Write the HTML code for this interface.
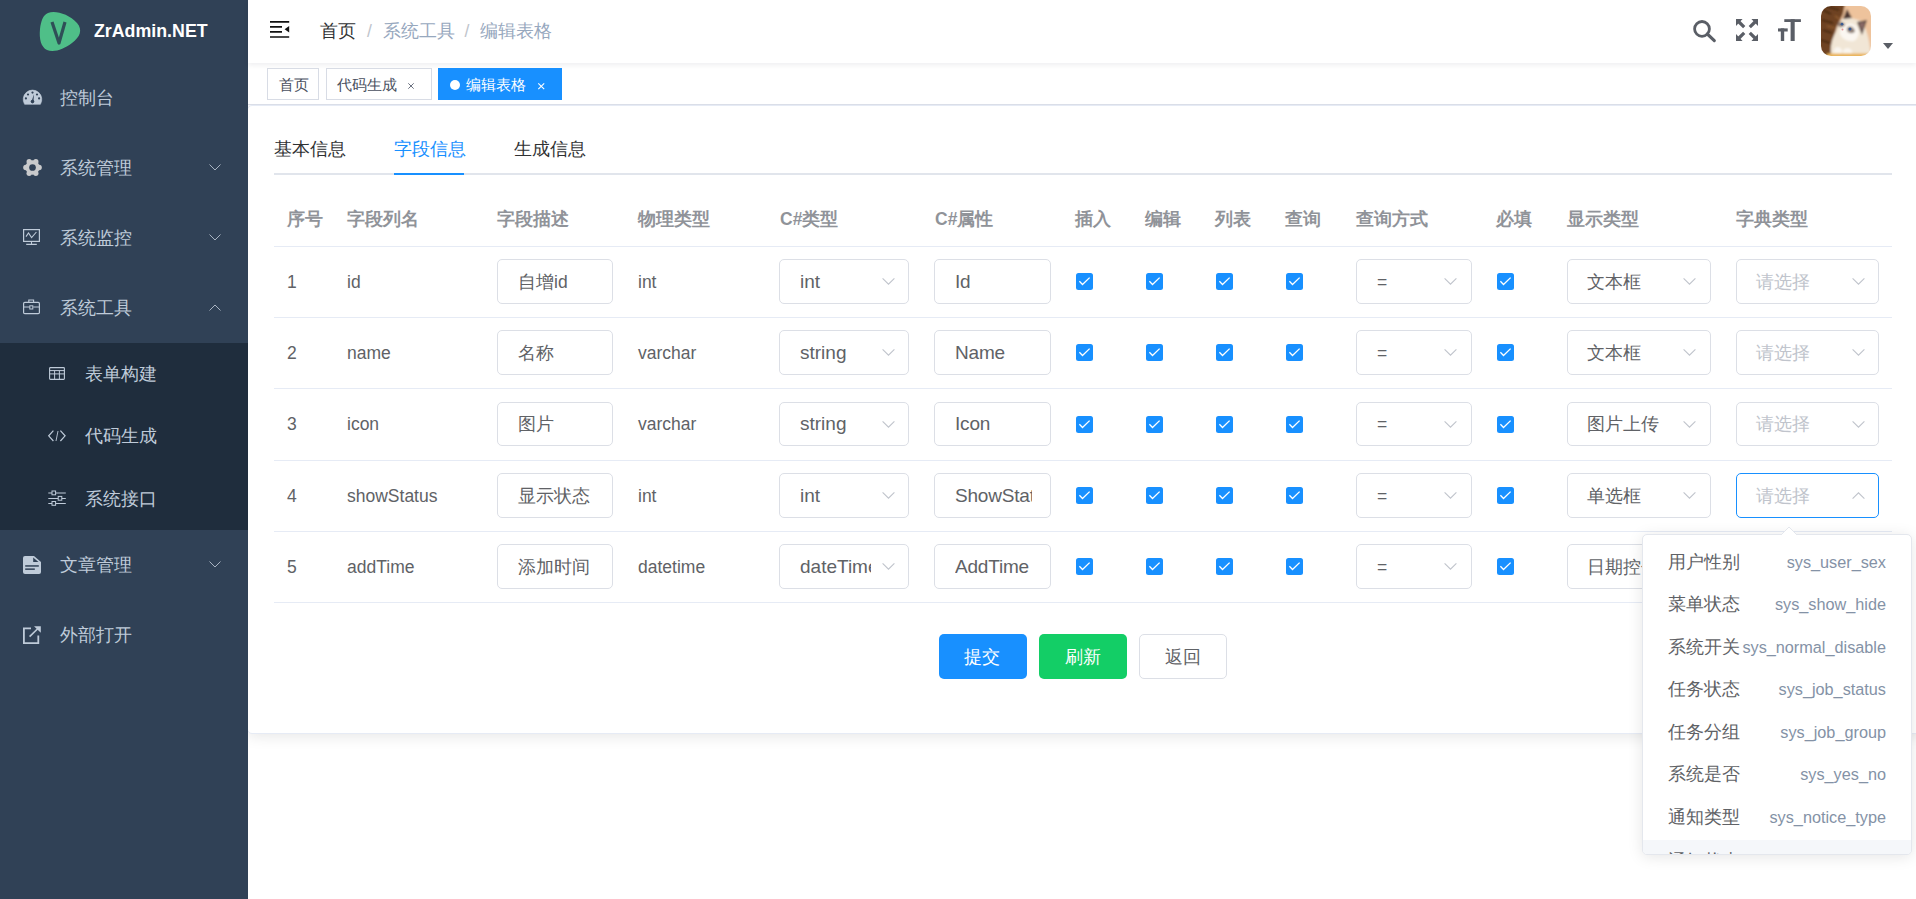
<!DOCTYPE html><html><head><meta charset="utf-8"><style>
*{box-sizing:border-box;margin:0;padding:0}
html,body{width:1916px;height:899px;overflow:hidden;background:#fff;font-family:"Liberation Sans", sans-serif}
.a{position:absolute}
.t{position:absolute;white-space:nowrap}
svg{position:absolute;overflow:visible}
</style></head><body>
<div class="a" style="left:247px;top:105px;width:1680px;height:629px;background:#fff;border:1px solid #e6ebf5;border-radius:5px;box-shadow:0 2px 15px 0 rgba(0,0,0,.1)"></div>
<div class="a" style="left:0;top:0;width:248px;height:899px;background:#304156"></div>
<div class="a" style="left:0;top:343px;width:248px;height:187px;background:#1f2d3d"></div>
<svg style="left:39px;top:11px" width="42" height="41" viewBox="0 0 42 41">
<path d="M9 2 C16 -1 30 3 38 12 C44 19 41 26 33 32 C25 38 15 42 8 39 C2 36 0 28 1 18 C2 10 4 4 9 2 Z" fill="#4fbf88"/>
<path d="M13 11 L20 32 L26 11" fill="none" stroke="#2f4f57" stroke-width="3.2" stroke-linejoin="round"/>
</svg>
<div class="t" style="left:94px;top:16.5px;height:28px;line-height:28px;font-size:17.8px;color:#fff;font-weight:bold;">ZrAdmin.NET</div>
<div class="t" style="left:60px;top:84.0px;height:28px;line-height:28px;font-size:17.5px;color:#bfcbd9;font-weight:normal;">控制台</div>
<div class="t" style="left:60px;top:154.0px;height:28px;line-height:28px;font-size:17.5px;color:#bfcbd9;font-weight:normal;">系统管理</div>
<svg style="left:209px;top:164px" width="12" height="7"><path d="M0.5 0.5 L6 6 L11.5 0.5" fill="none" stroke="#a9b4c2" stroke-width="1"/></svg>
<div class="t" style="left:60px;top:224.0px;height:28px;line-height:28px;font-size:17.5px;color:#bfcbd9;font-weight:normal;">系统监控</div>
<svg style="left:209px;top:234px" width="12" height="7"><path d="M0.5 0.5 L6 6 L11.5 0.5" fill="none" stroke="#a9b4c2" stroke-width="1"/></svg>
<div class="t" style="left:60px;top:294.0px;height:28px;line-height:28px;font-size:17.5px;color:#bfcbd9;font-weight:normal;">系统工具</div>
<svg style="left:209px;top:304px" width="12" height="7"><path d="M0.5 6.5 L6 1 L11.5 6.5" fill="none" stroke="#a9b4c2" stroke-width="1"/></svg>
<div class="t" style="left:60px;top:551.0px;height:28px;line-height:28px;font-size:17.5px;color:#bfcbd9;font-weight:normal;">文章管理</div>
<svg style="left:209px;top:561px" width="12" height="7"><path d="M0.5 0.5 L6 6 L11.5 0.5" fill="none" stroke="#a9b4c2" stroke-width="1"/></svg>
<div class="t" style="left:60px;top:621.0px;height:28px;line-height:28px;font-size:17.5px;color:#bfcbd9;font-weight:normal;">外部打开</div>
<div class="t" style="left:85px;top:360.0px;height:28px;line-height:28px;font-size:17.5px;color:#bfcbd9;font-weight:normal;">表单构建</div>
<div class="t" style="left:85px;top:422.0px;height:28px;line-height:28px;font-size:17.5px;color:#bfcbd9;font-weight:normal;">代码生成</div>
<div class="t" style="left:85px;top:485.0px;height:28px;line-height:28px;font-size:17.5px;color:#bfcbd9;font-weight:normal;">系统接口</div>
<svg style="left:23px;top:90px" width="19" height="15" viewBox="0 0 19 15">
<path d="M1.6 14.3 A9.3 9.3 0 1 1 17.4 14.3 Z" fill="#bfcbd9" stroke="#bfcbd9" stroke-width="0.6" stroke-linejoin="round"/>
<circle cx="9.5" cy="2.6" r="1.1" fill="#304156"/><circle cx="5" cy="4.5" r="1.1" fill="#304156"/><circle cx="14" cy="4.5" r="1.1" fill="#304156"/>
<circle cx="2.9" cy="8.4" r="1.1" fill="#304156"/><circle cx="16.1" cy="8.4" r="1.1" fill="#304156"/>
<path d="M8.6 11.6 L10.9 4.2 L10.5 11.8 Z" fill="#304156"/><circle cx="9.5" cy="11.6" r="1.8" fill="#304156"/>
</svg>
<svg style="left:23px;top:159px" width="19" height="17" viewBox="0 0 18.5 16.8">
<circle cx="9.25" cy="8.4" r="7.1" fill="#c9cacc"/><circle cx="15.85" cy="8.40" r="2.6" fill="#c9cacc"/><circle cx="12.55" cy="14.12" r="2.6" fill="#c9cacc"/><circle cx="5.95" cy="14.12" r="2.6" fill="#c9cacc"/><circle cx="2.65" cy="8.40" r="2.6" fill="#c9cacc"/><circle cx="5.95" cy="2.68" r="2.6" fill="#c9cacc"/><circle cx="12.55" cy="2.68" r="2.6" fill="#c9cacc"/>
<circle cx="9.25" cy="8.4" r="3.3" fill="#304156"/>
</svg>
<svg style="left:23px;top:229px" width="18" height="17" viewBox="0 0 18 17">
<rect x="0.6" y="0.6" width="15.8" height="11.8" fill="none" stroke="#bfcbd9" stroke-width="1.2"/>
<path d="M3 7.6 L5.5 3.9 L8.6 8.5 L13.4 3" fill="none" stroke="#bfcbd9" stroke-width="1.1"/>
<path d="M8.5 12.4 L8.5 15.4 M3.2 15.4 L13.8 15.4" stroke="#bfcbd9" stroke-width="1.1"/>
</svg>
<svg style="left:23px;top:299px" width="18" height="16" viewBox="0 0 18 16">
<rect x="0.6" y="3.4" width="15.8" height="11.2" rx="1.2" fill="none" stroke="#bfcbd9" stroke-width="1.2"/>
<path d="M5.8 3.4 L5.8 1 L10.6 1 L10.6 3.4" fill="none" stroke="#bfcbd9" stroke-width="1.1"/>
<path d="M0.6 8 L6.8 8 M10.2 8 L16.4 8" stroke="#bfcbd9" stroke-width="1.1"/>
<rect x="6.8" y="6.8" width="3" height="3.2" fill="none" stroke="#bfcbd9" stroke-width="1"/>
</svg>
<svg style="left:49px;top:367px" width="16" height="13" viewBox="0 0 16 13">
<rect x="0.6" y="0.6" width="14.8" height="11.8" rx="0.8" fill="none" stroke="#bfcbd9" stroke-width="1.1"/>
<path d="M0.6 3.6 L15.4 3.6 M0.6 6.9 L15.4 6.9 M5.6 3.6 L5.6 12.4 M10.4 3.6 L10.4 12.4" stroke="#bfcbd9" stroke-width="1"/>
</svg>
<svg style="left:48px;top:430px" width="18" height="12" viewBox="0 0 18 12">
<path d="M5.4 0.6 L0.7 5.8 L5.4 11" fill="none" stroke="#bfcbd9" stroke-width="1.2"/>
<path d="M12.4 0.6 L17.1 5.8 L12.4 11" fill="none" stroke="#bfcbd9" stroke-width="1.2"/>
<path d="M10 1 L8 11" stroke="#bfcbd9" stroke-width="0.9"/>
</svg>
<svg style="left:48px;top:490px" width="18" height="16" viewBox="0 0 18 16">
<path d="M0.3 3 L17.8 3 M0.3 8.5 L17.8 8.5 M0.3 13.5 L17.8 13.5" stroke="#bfcbd9" stroke-width="1"/>
<rect x="4" y="1" width="3.6" height="3.8" fill="#1f2d3d" stroke="#bfcbd9" stroke-width="1"/>
<rect x="10.2" y="6.4" width="3.6" height="3.8" fill="#1f2d3d" stroke="#bfcbd9" stroke-width="1"/>
<rect x="4" y="11.5" width="3.6" height="3.8" fill="#1f2d3d" stroke="#bfcbd9" stroke-width="1"/>
</svg>
<svg style="left:23px;top:556px" width="18" height="18" viewBox="0 0 18 18">
<path d="M2 0 L11 0 L18 6 L18 16 Q18 18 16 18 L2 18 Q0 18 0 16 L0 2 Q0 0 2 0 Z" fill="#bfcbd9"/>
<path d="M10.2 1.5 L10.2 6 L15.5 6 Z" fill="#304156"/>
<rect x="2.2" y="9.2" width="13.6" height="1.5" fill="#304156"/>
<rect x="2.2" y="12.4" width="9.6" height="1.5" fill="#304156"/>
</svg>
<svg style="left:23px;top:626px" width="18" height="18" viewBox="0 0 18 18">
<path d="M8 2.4 L0.9 2.4 L0.9 17.1 L15.3 17.1 L15.3 9.6" fill="none" stroke="#bfcbd9" stroke-width="1.8"/>
<path d="M6.6 10.6 L16.2 1.2" stroke="#bfcbd9" stroke-width="1.6"/>
<path d="M11 0.2 L17.8 0.2 L17.8 6.8 Z" fill="#bfcbd9"/>
</svg>
<div class="a" style="left:248px;top:63px;width:1668px;height:42px;background:#fff;border-bottom:1.5px solid #dadee8"></div>
<div class="a" style="left:248px;top:0;width:1668px;height:63px;background:#fff;box-shadow:0 2px 5px rgba(0,21,41,.07)"></div>
<svg style="left:270px;top:20px" width="20" height="19" viewBox="0 0 20 19">
<path d="M0 1.8 L19.2 1.8 M0 6.8 L12 6.8 M0 11.8 L12 11.8 M0 17 L19.2 17" stroke="#111" stroke-width="1.7"/>
<path d="M19.2 6 L14.6 9.3 L19.2 12.6 Z" fill="#111"/>
</svg>
<div class="t" style="left:320px;top:16.5px;height:28px;line-height:28px;font-size:17.5px;color:#303133;font-weight:normal;">首页</div>
<div class="t" style="left:367px;top:16.5px;height:28px;line-height:28px;font-size:17.5px;color:#c0c4cc;font-weight:normal;">/</div>
<div class="t" style="left:383px;top:16.5px;height:28px;line-height:28px;font-size:17.5px;color:#97a8be;font-weight:normal;">系统工具</div>
<div class="t" style="left:464.5px;top:16.5px;height:28px;line-height:28px;font-size:17.5px;color:#c0c4cc;font-weight:normal;">/</div>
<div class="t" style="left:480px;top:16.5px;height:28px;line-height:28px;font-size:17.5px;color:#97a8be;font-weight:normal;">编辑表格</div>
<svg style="left:1692px;top:19px" width="25" height="24" viewBox="0 0 25 24">
<circle cx="10" cy="9.9" r="7.4" fill="none" stroke="#5a5e66" stroke-width="2.8"/>
<path d="M15.3 15 L22.3 21.6" stroke="#5a5e66" stroke-width="3.1" stroke-linecap="round"/>
</svg>
<svg style="left:1736px;top:19px" width="22" height="22" viewBox="0 0 22 22">
<path d="M0 0 L6.6 0 L0 6.9 Z M22 0 L15.4 0 L22 6.9 Z M0 22 L6.6 22 L0 15.1 Z M22 22 L15.4 22 L22 15.1 Z" fill="#5a5e66"/>
<path d="M2 2 L8.2 8.2 M20 2 L13.8 8.2 M2 20 L8.2 13.8 M20 20 L13.8 13.8" stroke="#5a5e66" stroke-width="3.2"/>
</svg>
<svg style="left:1778px;top:19px" width="24" height="23" viewBox="0 0 24 23">
<rect x="6.3" y="0.2" width="16.6" height="2.8" fill="#5a5e66"/><rect x="12.6" y="0.2" width="4.1" height="21.8" fill="#5a5e66"/>
<rect x="0" y="9.4" width="9.7" height="3.1" fill="#5a5e66"/><rect x="2.8" y="9.4" width="3.4" height="12.6" fill="#5a5e66"/>
</svg>
<svg style="left:1821px;top:6px" width="50" height="50" viewBox="0 0 50 50">
<defs><clipPath id="av"><rect x="0" y="0" width="50" height="50" rx="10"/></clipPath>
<filter id="bl" x="-10%" y="-10%" width="120%" height="120%"><feGaussianBlur stdDeviation="0.9"/></filter></defs>
<g clip-path="url(#av)"><g filter="url(#bl)">
<rect x="-2" y="-2" width="54" height="54" fill="#eec39c"/>
<path d="M-2 -2 L24 -2 L22 8 L16 20 L12 34 L10 52 L-2 52 Z" fill="#6e4222"/>
<path d="M2 4 L10 8 M1 14 L12 17 M2 24 L11 27 M0 34 L9 37 M4 0 L18 4" stroke="#3e2410" stroke-width="1.6"/>
<path d="M14 10 L20 14 M6 20 L14 22" stroke="#9a6436" stroke-width="1.2"/>
<path d="M10 50 C9 40 11 32 15 26 C17 18 20 13 24 11 L30 12 C34 13 37 14 41 15 C45 22 48 32 49 42 L50 50 Z" fill="#f1e6d6"/>
<path d="M24 20 C27 16 33 17 36 21 C39 26 38 32 33 35 C27 36 21 33 19 28 C18 24 21 21 24 20 Z" fill="#fbf7f2"/>
<path d="M13 44 C14 40 19 40 21 44 L21 50 L12 50 Z M22 45 C24 41 29 41 31 45 L31 50 L22 50 Z" fill="#faf6f0"/>
<rect x="6" y="47.5" width="54" height="6" fill="#e9b45a"/>
<path d="M22 13 L26 3 L31 12 Z" fill="#4a3633"/>
<path d="M36 16 L46 14 L41 29 Z" fill="#54433f"/>
<path d="M38 17 L44 16 L41 25 Z" fill="#8a6a66"/>
<path d="M17 17 C19 15 23 16 24 19 C23 21 19 22 17 20 Z" fill="#8f8078"/>
<path d="M26 22 C29 19 33 21 34 25 C33 28 28 28 26 25 Z" fill="#8f8078"/>
</g>
<circle cx="21" cy="18.2" r="1.4" fill="#3b5c94"/><circle cx="29" cy="23" r="1.5" fill="#3b5c94"/>
<circle cx="21.5" cy="23.5" r="1" fill="#e49a9a"/>
</g></svg>
<svg style="left:1883px;top:43px" width="10" height="6"><path d="M0 0 L10 0 L5 6 Z" fill="#5a5e66"/></svg>
<div class="a" style="left:267px;top:68px;width:52px;height:32px;border:1.25px solid #d8dce5;background:#fff"></div>
<div class="t" style="left:278.5px;top:72.7px;height:24px;line-height:24px;font-size:15px;color:#495060;font-weight:normal;">首页</div>
<div class="a" style="left:326px;top:68px;width:106px;height:32px;border:1.25px solid #d8dce5;background:#fff"></div>
<div class="t" style="left:337px;top:72.7px;height:24px;line-height:24px;font-size:15px;color:#495060;font-weight:normal;">代码生成</div>
<svg style="left:407.5px;top:82.8px" width="6" height="6"><path d="M0.3 0.3 L5.7 5.7 M5.7 0.3 L0.3 5.7" stroke="#6b7180" stroke-width="1"/></svg>
<div class="a" style="left:438px;top:68px;width:124px;height:32px;background:#1890ff"></div>
<div class="a" style="left:450px;top:80px;width:10px;height:10px;border-radius:50%;background:#fff"></div>
<div class="t" style="left:466px;top:72.7px;height:24px;line-height:24px;font-size:15px;color:#fff;font-weight:normal;">编辑表格</div>
<svg style="left:537.8px;top:82.5px" width="6.5" height="6.5"><path d="M0.3 0.3 L6.2 6.2 M6.2 0.3 L0.3 6.2" stroke="#fff" stroke-width="1.1"/></svg>
<div class="a" style="left:274px;top:173px;width:1618px;height:1.6px;background:#e1e5ec"></div>
<div class="a" style="left:394px;top:172.7px;width:70px;height:2px;background:#1890ff"></div>
<div class="t" style="left:274px;top:135.0px;height:28px;line-height:28px;font-size:17.5px;color:#303133;font-weight:normal;">基本信息</div>
<div class="t" style="left:394px;top:135.0px;height:28px;line-height:28px;font-size:17.5px;color:#1890ff;font-weight:normal;">字段信息</div>
<div class="t" style="left:514px;top:135.0px;height:28px;line-height:28px;font-size:17.5px;color:#303133;font-weight:normal;">生成信息</div>
<div class="t" style="left:287px;top:204.5px;height:28px;line-height:28px;font-size:17.5px;color:#909399;font-weight:bold;">序号</div>
<div class="t" style="left:347px;top:204.5px;height:28px;line-height:28px;font-size:17.5px;color:#909399;font-weight:bold;">字段列名</div>
<div class="t" style="left:497px;top:204.5px;height:28px;line-height:28px;font-size:17.5px;color:#909399;font-weight:bold;">字段描述</div>
<div class="t" style="left:638px;top:204.5px;height:28px;line-height:28px;font-size:17.5px;color:#909399;font-weight:bold;">物理类型</div>
<div class="t" style="left:780px;top:204.5px;height:28px;line-height:28px;font-size:17.5px;color:#909399;font-weight:bold;">C#类型</div>
<div class="t" style="left:935px;top:204.5px;height:28px;line-height:28px;font-size:17.5px;color:#909399;font-weight:bold;">C#属性</div>
<div class="t" style="left:1075px;top:204.5px;height:28px;line-height:28px;font-size:17.5px;color:#909399;font-weight:bold;">插入</div>
<div class="t" style="left:1145px;top:204.5px;height:28px;line-height:28px;font-size:17.5px;color:#909399;font-weight:bold;">编辑</div>
<div class="t" style="left:1215px;top:204.5px;height:28px;line-height:28px;font-size:17.5px;color:#909399;font-weight:bold;">列表</div>
<div class="t" style="left:1285px;top:204.5px;height:28px;line-height:28px;font-size:17.5px;color:#909399;font-weight:bold;">查询</div>
<div class="t" style="left:1356px;top:204.5px;height:28px;line-height:28px;font-size:17.5px;color:#909399;font-weight:bold;">查询方式</div>
<div class="t" style="left:1496px;top:204.5px;height:28px;line-height:28px;font-size:17.5px;color:#909399;font-weight:bold;">必填</div>
<div class="t" style="left:1567px;top:204.5px;height:28px;line-height:28px;font-size:17.5px;color:#909399;font-weight:bold;">显示类型</div>
<div class="t" style="left:1736px;top:204.5px;height:28px;line-height:28px;font-size:17.5px;color:#909399;font-weight:bold;">字典类型</div>
<div class="a" style="left:274px;top:246px;width:1618px;height:1.25px;background:#e6ebf5"></div>
<div class="a" style="left:274px;top:317px;width:1618px;height:1.25px;background:#e6ebf5"></div>
<div class="a" style="left:274px;top:388px;width:1618px;height:1.25px;background:#e6ebf5"></div>
<div class="a" style="left:274px;top:460px;width:1618px;height:1.25px;background:#e6ebf5"></div>
<div class="a" style="left:274px;top:531px;width:1618px;height:1.25px;background:#e6ebf5"></div>
<div class="a" style="left:274px;top:602px;width:1618px;height:1.25px;background:#e6ebf5"></div>
<div class="t" style="left:287px;top:267.5px;height:28px;line-height:28px;font-size:17.5px;color:#606266;font-weight:normal;">1</div>
<div class="t" style="left:347px;top:267.5px;height:28px;line-height:28px;font-size:17.5px;color:#606266;font-weight:normal;">id</div>
<div class="a" style="left:497px;top:259.25px;width:116px;height:44.5px;border:1.25px solid #dcdfe6;border-radius:5px;background:#fff"></div>
<div class="t" style="left:518px;top:267.5px;height:28px;line-height:28px;font-size:17.5px;color:#606266;font-weight:normal;">自增id</div>
<div class="t" style="left:638px;top:267.5px;height:28px;line-height:28px;font-size:17.5px;color:#606266;font-weight:normal;">int</div>
<div class="a" style="left:779px;top:259.25px;width:130px;height:44.5px;border:1.25px solid #dcdfe6;border-radius:5px;background:#fff"></div>
<div class="t" style="left:800px;top:267.5px;height:28px;line-height:28px;width:71px;overflow:hidden;font-size:19px;color:#606266">int</div>
<svg style="left:882px;top:278.0px" width="13" height="7"><path d="M0.6 0.4 L6.5 6.2 L12.4 0.4" fill="none" stroke="#c0c4cc" stroke-width="1.1"/></svg>
<div class="a" style="left:934px;top:259.25px;width:117px;height:44.5px;border:1.25px solid #dcdfe6;border-radius:5px;background:#fff"></div>
<div class="t" style="left:955px;top:267.5px;height:28px;line-height:28px;width:77px;overflow:hidden;letter-spacing:-0.2px;font-size:19px;color:#606266">Id</div>
<svg style="left:1076px;top:273.0px" width="17" height="17" viewBox="0 0 17 17"><rect width="17" height="17" rx="2.5" fill="#1890ff"/><path d="M3.4 8.3 L6.5 11.5 L13.6 4.6" fill="none" stroke="#fff" stroke-width="1.3"/></svg>
<svg style="left:1146px;top:273.0px" width="17" height="17" viewBox="0 0 17 17"><rect width="17" height="17" rx="2.5" fill="#1890ff"/><path d="M3.4 8.3 L6.5 11.5 L13.6 4.6" fill="none" stroke="#fff" stroke-width="1.3"/></svg>
<svg style="left:1216px;top:273.0px" width="17" height="17" viewBox="0 0 17 17"><rect width="17" height="17" rx="2.5" fill="#1890ff"/><path d="M3.4 8.3 L6.5 11.5 L13.6 4.6" fill="none" stroke="#fff" stroke-width="1.3"/></svg>
<svg style="left:1286px;top:273.0px" width="17" height="17" viewBox="0 0 17 17"><rect width="17" height="17" rx="2.5" fill="#1890ff"/><path d="M3.4 8.3 L6.5 11.5 L13.6 4.6" fill="none" stroke="#fff" stroke-width="1.3"/></svg>
<svg style="left:1497px;top:273.0px" width="17" height="17" viewBox="0 0 17 17"><rect width="17" height="17" rx="2.5" fill="#1890ff"/><path d="M3.4 8.3 L6.5 11.5 L13.6 4.6" fill="none" stroke="#fff" stroke-width="1.3"/></svg>
<div class="a" style="left:1356px;top:259.25px;width:116px;height:44.5px;border:1.25px solid #dcdfe6;border-radius:5px;background:#fff"></div>
<div class="t" style="left:1377px;top:267.5px;height:28px;line-height:28px;font-size:17.5px;color:#606266;font-weight:normal;">=</div>
<svg style="left:1444px;top:278.0px" width="13" height="7"><path d="M0.6 0.4 L6.5 6.2 L12.4 0.4" fill="none" stroke="#c0c4cc" stroke-width="1.1"/></svg>
<div class="a" style="left:1567px;top:259.25px;width:144px;height:44.5px;border:1.25px solid #dcdfe6;border-radius:5px;background:#fff"></div>
<div class="t" style="left:1587px;top:267.5px;height:28px;line-height:28px;font-size:17.5px;color:#606266;font-weight:normal;">文本框</div>
<svg style="left:1683px;top:278.0px" width="13" height="7"><path d="M0.6 0.4 L6.5 6.2 L12.4 0.4" fill="none" stroke="#c0c4cc" stroke-width="1.1"/></svg>
<div class="a" style="left:1736px;top:259.25px;width:143px;height:44.5px;border:1.25px solid #dcdfe6;border-radius:5px;background:#fff"></div>
<div class="t" style="left:1756px;top:267.5px;height:28px;line-height:28px;font-size:17.5px;color:#c0c4cc;font-weight:normal;">请选择</div>
<svg style="left:1852px;top:278.0px" width="13" height="7"><path d="M0.6 0.4 L6.5 6.2 L12.4 0.4" fill="none" stroke="#c0c4cc" stroke-width="1.1"/></svg>
<div class="t" style="left:287px;top:338.5px;height:28px;line-height:28px;font-size:17.5px;color:#606266;font-weight:normal;">2</div>
<div class="t" style="left:347px;top:338.5px;height:28px;line-height:28px;font-size:17.5px;color:#606266;font-weight:normal;">name</div>
<div class="a" style="left:497px;top:330.25px;width:116px;height:44.5px;border:1.25px solid #dcdfe6;border-radius:5px;background:#fff"></div>
<div class="t" style="left:518px;top:338.5px;height:28px;line-height:28px;font-size:17.5px;color:#606266;font-weight:normal;">名称</div>
<div class="t" style="left:638px;top:338.5px;height:28px;line-height:28px;font-size:17.5px;color:#606266;font-weight:normal;">varchar</div>
<div class="a" style="left:779px;top:330.25px;width:130px;height:44.5px;border:1.25px solid #dcdfe6;border-radius:5px;background:#fff"></div>
<div class="t" style="left:800px;top:338.5px;height:28px;line-height:28px;width:71px;overflow:hidden;font-size:19px;color:#606266">string</div>
<svg style="left:882px;top:349.0px" width="13" height="7"><path d="M0.6 0.4 L6.5 6.2 L12.4 0.4" fill="none" stroke="#c0c4cc" stroke-width="1.1"/></svg>
<div class="a" style="left:934px;top:330.25px;width:117px;height:44.5px;border:1.25px solid #dcdfe6;border-radius:5px;background:#fff"></div>
<div class="t" style="left:955px;top:338.5px;height:28px;line-height:28px;width:77px;overflow:hidden;letter-spacing:-0.2px;font-size:19px;color:#606266">Name</div>
<svg style="left:1076px;top:344.0px" width="17" height="17" viewBox="0 0 17 17"><rect width="17" height="17" rx="2.5" fill="#1890ff"/><path d="M3.4 8.3 L6.5 11.5 L13.6 4.6" fill="none" stroke="#fff" stroke-width="1.3"/></svg>
<svg style="left:1146px;top:344.0px" width="17" height="17" viewBox="0 0 17 17"><rect width="17" height="17" rx="2.5" fill="#1890ff"/><path d="M3.4 8.3 L6.5 11.5 L13.6 4.6" fill="none" stroke="#fff" stroke-width="1.3"/></svg>
<svg style="left:1216px;top:344.0px" width="17" height="17" viewBox="0 0 17 17"><rect width="17" height="17" rx="2.5" fill="#1890ff"/><path d="M3.4 8.3 L6.5 11.5 L13.6 4.6" fill="none" stroke="#fff" stroke-width="1.3"/></svg>
<svg style="left:1286px;top:344.0px" width="17" height="17" viewBox="0 0 17 17"><rect width="17" height="17" rx="2.5" fill="#1890ff"/><path d="M3.4 8.3 L6.5 11.5 L13.6 4.6" fill="none" stroke="#fff" stroke-width="1.3"/></svg>
<svg style="left:1497px;top:344.0px" width="17" height="17" viewBox="0 0 17 17"><rect width="17" height="17" rx="2.5" fill="#1890ff"/><path d="M3.4 8.3 L6.5 11.5 L13.6 4.6" fill="none" stroke="#fff" stroke-width="1.3"/></svg>
<div class="a" style="left:1356px;top:330.25px;width:116px;height:44.5px;border:1.25px solid #dcdfe6;border-radius:5px;background:#fff"></div>
<div class="t" style="left:1377px;top:338.5px;height:28px;line-height:28px;font-size:17.5px;color:#606266;font-weight:normal;">=</div>
<svg style="left:1444px;top:349.0px" width="13" height="7"><path d="M0.6 0.4 L6.5 6.2 L12.4 0.4" fill="none" stroke="#c0c4cc" stroke-width="1.1"/></svg>
<div class="a" style="left:1567px;top:330.25px;width:144px;height:44.5px;border:1.25px solid #dcdfe6;border-radius:5px;background:#fff"></div>
<div class="t" style="left:1587px;top:338.5px;height:28px;line-height:28px;font-size:17.5px;color:#606266;font-weight:normal;">文本框</div>
<svg style="left:1683px;top:349.0px" width="13" height="7"><path d="M0.6 0.4 L6.5 6.2 L12.4 0.4" fill="none" stroke="#c0c4cc" stroke-width="1.1"/></svg>
<div class="a" style="left:1736px;top:330.25px;width:143px;height:44.5px;border:1.25px solid #dcdfe6;border-radius:5px;background:#fff"></div>
<div class="t" style="left:1756px;top:338.5px;height:28px;line-height:28px;font-size:17.5px;color:#c0c4cc;font-weight:normal;">请选择</div>
<svg style="left:1852px;top:349.0px" width="13" height="7"><path d="M0.6 0.4 L6.5 6.2 L12.4 0.4" fill="none" stroke="#c0c4cc" stroke-width="1.1"/></svg>
<div class="t" style="left:287px;top:410.0px;height:28px;line-height:28px;font-size:17.5px;color:#606266;font-weight:normal;">3</div>
<div class="t" style="left:347px;top:410.0px;height:28px;line-height:28px;font-size:17.5px;color:#606266;font-weight:normal;">icon</div>
<div class="a" style="left:497px;top:401.75px;width:116px;height:44.5px;border:1.25px solid #dcdfe6;border-radius:5px;background:#fff"></div>
<div class="t" style="left:518px;top:410.0px;height:28px;line-height:28px;font-size:17.5px;color:#606266;font-weight:normal;">图片</div>
<div class="t" style="left:638px;top:410.0px;height:28px;line-height:28px;font-size:17.5px;color:#606266;font-weight:normal;">varchar</div>
<div class="a" style="left:779px;top:401.75px;width:130px;height:44.5px;border:1.25px solid #dcdfe6;border-radius:5px;background:#fff"></div>
<div class="t" style="left:800px;top:410.0px;height:28px;line-height:28px;width:71px;overflow:hidden;font-size:19px;color:#606266">string</div>
<svg style="left:882px;top:420.5px" width="13" height="7"><path d="M0.6 0.4 L6.5 6.2 L12.4 0.4" fill="none" stroke="#c0c4cc" stroke-width="1.1"/></svg>
<div class="a" style="left:934px;top:401.75px;width:117px;height:44.5px;border:1.25px solid #dcdfe6;border-radius:5px;background:#fff"></div>
<div class="t" style="left:955px;top:410.0px;height:28px;line-height:28px;width:77px;overflow:hidden;letter-spacing:-0.2px;font-size:19px;color:#606266">Icon</div>
<svg style="left:1076px;top:415.5px" width="17" height="17" viewBox="0 0 17 17"><rect width="17" height="17" rx="2.5" fill="#1890ff"/><path d="M3.4 8.3 L6.5 11.5 L13.6 4.6" fill="none" stroke="#fff" stroke-width="1.3"/></svg>
<svg style="left:1146px;top:415.5px" width="17" height="17" viewBox="0 0 17 17"><rect width="17" height="17" rx="2.5" fill="#1890ff"/><path d="M3.4 8.3 L6.5 11.5 L13.6 4.6" fill="none" stroke="#fff" stroke-width="1.3"/></svg>
<svg style="left:1216px;top:415.5px" width="17" height="17" viewBox="0 0 17 17"><rect width="17" height="17" rx="2.5" fill="#1890ff"/><path d="M3.4 8.3 L6.5 11.5 L13.6 4.6" fill="none" stroke="#fff" stroke-width="1.3"/></svg>
<svg style="left:1286px;top:415.5px" width="17" height="17" viewBox="0 0 17 17"><rect width="17" height="17" rx="2.5" fill="#1890ff"/><path d="M3.4 8.3 L6.5 11.5 L13.6 4.6" fill="none" stroke="#fff" stroke-width="1.3"/></svg>
<svg style="left:1497px;top:415.5px" width="17" height="17" viewBox="0 0 17 17"><rect width="17" height="17" rx="2.5" fill="#1890ff"/><path d="M3.4 8.3 L6.5 11.5 L13.6 4.6" fill="none" stroke="#fff" stroke-width="1.3"/></svg>
<div class="a" style="left:1356px;top:401.75px;width:116px;height:44.5px;border:1.25px solid #dcdfe6;border-radius:5px;background:#fff"></div>
<div class="t" style="left:1377px;top:410.0px;height:28px;line-height:28px;font-size:17.5px;color:#606266;font-weight:normal;">=</div>
<svg style="left:1444px;top:420.5px" width="13" height="7"><path d="M0.6 0.4 L6.5 6.2 L12.4 0.4" fill="none" stroke="#c0c4cc" stroke-width="1.1"/></svg>
<div class="a" style="left:1567px;top:401.75px;width:144px;height:44.5px;border:1.25px solid #dcdfe6;border-radius:5px;background:#fff"></div>
<div class="t" style="left:1587px;top:410.0px;height:28px;line-height:28px;font-size:17.5px;color:#606266;font-weight:normal;">图片上传</div>
<svg style="left:1683px;top:420.5px" width="13" height="7"><path d="M0.6 0.4 L6.5 6.2 L12.4 0.4" fill="none" stroke="#c0c4cc" stroke-width="1.1"/></svg>
<div class="a" style="left:1736px;top:401.75px;width:143px;height:44.5px;border:1.25px solid #dcdfe6;border-radius:5px;background:#fff"></div>
<div class="t" style="left:1756px;top:410.0px;height:28px;line-height:28px;font-size:17.5px;color:#c0c4cc;font-weight:normal;">请选择</div>
<svg style="left:1852px;top:420.5px" width="13" height="7"><path d="M0.6 0.4 L6.5 6.2 L12.4 0.4" fill="none" stroke="#c0c4cc" stroke-width="1.1"/></svg>
<div class="t" style="left:287px;top:481.5px;height:28px;line-height:28px;font-size:17.5px;color:#606266;font-weight:normal;">4</div>
<div class="t" style="left:347px;top:481.5px;height:28px;line-height:28px;font-size:17.5px;color:#606266;font-weight:normal;">showStatus</div>
<div class="a" style="left:497px;top:473.25px;width:116px;height:44.5px;border:1.25px solid #dcdfe6;border-radius:5px;background:#fff"></div>
<div class="t" style="left:518px;top:481.5px;height:28px;line-height:28px;font-size:17.5px;color:#606266;font-weight:normal;">显示状态</div>
<div class="t" style="left:638px;top:481.5px;height:28px;line-height:28px;font-size:17.5px;color:#606266;font-weight:normal;">int</div>
<div class="a" style="left:779px;top:473.25px;width:130px;height:44.5px;border:1.25px solid #dcdfe6;border-radius:5px;background:#fff"></div>
<div class="t" style="left:800px;top:481.5px;height:28px;line-height:28px;width:71px;overflow:hidden;font-size:19px;color:#606266">int</div>
<svg style="left:882px;top:492.0px" width="13" height="7"><path d="M0.6 0.4 L6.5 6.2 L12.4 0.4" fill="none" stroke="#c0c4cc" stroke-width="1.1"/></svg>
<div class="a" style="left:934px;top:473.25px;width:117px;height:44.5px;border:1.25px solid #dcdfe6;border-radius:5px;background:#fff"></div>
<div class="t" style="left:955px;top:481.5px;height:28px;line-height:28px;width:77px;overflow:hidden;letter-spacing:-0.2px;font-size:19px;color:#606266">ShowStat</div>
<svg style="left:1076px;top:487.0px" width="17" height="17" viewBox="0 0 17 17"><rect width="17" height="17" rx="2.5" fill="#1890ff"/><path d="M3.4 8.3 L6.5 11.5 L13.6 4.6" fill="none" stroke="#fff" stroke-width="1.3"/></svg>
<svg style="left:1146px;top:487.0px" width="17" height="17" viewBox="0 0 17 17"><rect width="17" height="17" rx="2.5" fill="#1890ff"/><path d="M3.4 8.3 L6.5 11.5 L13.6 4.6" fill="none" stroke="#fff" stroke-width="1.3"/></svg>
<svg style="left:1216px;top:487.0px" width="17" height="17" viewBox="0 0 17 17"><rect width="17" height="17" rx="2.5" fill="#1890ff"/><path d="M3.4 8.3 L6.5 11.5 L13.6 4.6" fill="none" stroke="#fff" stroke-width="1.3"/></svg>
<svg style="left:1286px;top:487.0px" width="17" height="17" viewBox="0 0 17 17"><rect width="17" height="17" rx="2.5" fill="#1890ff"/><path d="M3.4 8.3 L6.5 11.5 L13.6 4.6" fill="none" stroke="#fff" stroke-width="1.3"/></svg>
<svg style="left:1497px;top:487.0px" width="17" height="17" viewBox="0 0 17 17"><rect width="17" height="17" rx="2.5" fill="#1890ff"/><path d="M3.4 8.3 L6.5 11.5 L13.6 4.6" fill="none" stroke="#fff" stroke-width="1.3"/></svg>
<div class="a" style="left:1356px;top:473.25px;width:116px;height:44.5px;border:1.25px solid #dcdfe6;border-radius:5px;background:#fff"></div>
<div class="t" style="left:1377px;top:481.5px;height:28px;line-height:28px;font-size:17.5px;color:#606266;font-weight:normal;">=</div>
<svg style="left:1444px;top:492.0px" width="13" height="7"><path d="M0.6 0.4 L6.5 6.2 L12.4 0.4" fill="none" stroke="#c0c4cc" stroke-width="1.1"/></svg>
<div class="a" style="left:1567px;top:473.25px;width:144px;height:44.5px;border:1.25px solid #dcdfe6;border-radius:5px;background:#fff"></div>
<div class="t" style="left:1587px;top:481.5px;height:28px;line-height:28px;font-size:17.5px;color:#606266;font-weight:normal;">单选框</div>
<svg style="left:1683px;top:492.0px" width="13" height="7"><path d="M0.6 0.4 L6.5 6.2 L12.4 0.4" fill="none" stroke="#c0c4cc" stroke-width="1.1"/></svg>
<div class="a" style="left:1736px;top:473.25px;width:143px;height:44.5px;border:1.25px solid #1890ff;border-radius:5px;background:#fff"></div>
<div class="t" style="left:1756px;top:481.5px;height:28px;line-height:28px;font-size:17.5px;color:#c0c4cc;font-weight:normal;">请选择</div>
<svg style="left:1852px;top:492.0px" width="13" height="7"><path d="M0.6 6.6 L6.5 0.8 L12.4 6.6" fill="none" stroke="#c0c4cc" stroke-width="1.1"/></svg>
<div class="t" style="left:287px;top:552.5px;height:28px;line-height:28px;font-size:17.5px;color:#606266;font-weight:normal;">5</div>
<div class="t" style="left:347px;top:552.5px;height:28px;line-height:28px;font-size:17.5px;color:#606266;font-weight:normal;">addTime</div>
<div class="a" style="left:497px;top:544.25px;width:116px;height:44.5px;border:1.25px solid #dcdfe6;border-radius:5px;background:#fff"></div>
<div class="t" style="left:518px;top:552.5px;height:28px;line-height:28px;font-size:17.5px;color:#606266;font-weight:normal;">添加时间</div>
<div class="t" style="left:638px;top:552.5px;height:28px;line-height:28px;font-size:17.5px;color:#606266;font-weight:normal;">datetime</div>
<div class="a" style="left:779px;top:544.25px;width:130px;height:44.5px;border:1.25px solid #dcdfe6;border-radius:5px;background:#fff"></div>
<div class="t" style="left:800px;top:552.5px;height:28px;line-height:28px;width:71px;overflow:hidden;font-size:19px;color:#606266">dateTime</div>
<svg style="left:882px;top:563.0px" width="13" height="7"><path d="M0.6 0.4 L6.5 6.2 L12.4 0.4" fill="none" stroke="#c0c4cc" stroke-width="1.1"/></svg>
<div class="a" style="left:934px;top:544.25px;width:117px;height:44.5px;border:1.25px solid #dcdfe6;border-radius:5px;background:#fff"></div>
<div class="t" style="left:955px;top:552.5px;height:28px;line-height:28px;width:77px;overflow:hidden;letter-spacing:-0.2px;font-size:19px;color:#606266">AddTime</div>
<svg style="left:1076px;top:558.0px" width="17" height="17" viewBox="0 0 17 17"><rect width="17" height="17" rx="2.5" fill="#1890ff"/><path d="M3.4 8.3 L6.5 11.5 L13.6 4.6" fill="none" stroke="#fff" stroke-width="1.3"/></svg>
<svg style="left:1146px;top:558.0px" width="17" height="17" viewBox="0 0 17 17"><rect width="17" height="17" rx="2.5" fill="#1890ff"/><path d="M3.4 8.3 L6.5 11.5 L13.6 4.6" fill="none" stroke="#fff" stroke-width="1.3"/></svg>
<svg style="left:1216px;top:558.0px" width="17" height="17" viewBox="0 0 17 17"><rect width="17" height="17" rx="2.5" fill="#1890ff"/><path d="M3.4 8.3 L6.5 11.5 L13.6 4.6" fill="none" stroke="#fff" stroke-width="1.3"/></svg>
<svg style="left:1286px;top:558.0px" width="17" height="17" viewBox="0 0 17 17"><rect width="17" height="17" rx="2.5" fill="#1890ff"/><path d="M3.4 8.3 L6.5 11.5 L13.6 4.6" fill="none" stroke="#fff" stroke-width="1.3"/></svg>
<svg style="left:1497px;top:558.0px" width="17" height="17" viewBox="0 0 17 17"><rect width="17" height="17" rx="2.5" fill="#1890ff"/><path d="M3.4 8.3 L6.5 11.5 L13.6 4.6" fill="none" stroke="#fff" stroke-width="1.3"/></svg>
<div class="a" style="left:1356px;top:544.25px;width:116px;height:44.5px;border:1.25px solid #dcdfe6;border-radius:5px;background:#fff"></div>
<div class="t" style="left:1377px;top:552.5px;height:28px;line-height:28px;font-size:17.5px;color:#606266;font-weight:normal;">=</div>
<svg style="left:1444px;top:563.0px" width="13" height="7"><path d="M0.6 0.4 L6.5 6.2 L12.4 0.4" fill="none" stroke="#c0c4cc" stroke-width="1.1"/></svg>
<div class="a" style="left:1567px;top:544.25px;width:144px;height:44.5px;border:1.25px solid #dcdfe6;border-radius:5px;background:#fff"></div>
<div class="t" style="left:1587px;top:552.5px;height:28px;line-height:28px;font-size:17.5px;color:#606266;font-weight:normal;">日期控件</div>
<svg style="left:1683px;top:563.0px" width="13" height="7"><path d="M0.6 0.4 L6.5 6.2 L12.4 0.4" fill="none" stroke="#c0c4cc" stroke-width="1.1"/></svg>
<div class="a" style="left:1736px;top:544.25px;width:143px;height:44.5px;border:1.25px solid #dcdfe6;border-radius:5px;background:#fff"></div>
<div class="t" style="left:1756px;top:552.5px;height:28px;line-height:28px;font-size:17.5px;color:#c0c4cc;font-weight:normal;">请选择</div>
<svg style="left:1852px;top:563.0px" width="13" height="7"><path d="M0.6 0.4 L6.5 6.2 L12.4 0.4" fill="none" stroke="#c0c4cc" stroke-width="1.1"/></svg>
<div class="a" style="left:939px;top:634px;width:88px;height:45px;border-radius:5px;background:#1890ff"></div>
<div class="t" style="left:964px;top:642.5px;height:28px;line-height:28px;font-size:17.5px;color:#fff;font-weight:normal;">提交</div>
<div class="a" style="left:1039px;top:634px;width:88px;height:45px;border-radius:5px;background:#13ce66"></div>
<div class="t" style="left:1065px;top:642.5px;height:28px;line-height:28px;font-size:17.5px;color:#fff;font-weight:normal;">刷新</div>
<div class="a" style="left:1139px;top:634px;width:88px;height:45px;border-radius:5px;background:#fff;border:1.25px solid #dcdfe6"></div>
<div class="t" style="left:1165px;top:642.5px;height:28px;line-height:28px;font-size:17.5px;color:#606266;font-weight:normal;">返回</div>
<div class="a" style="left:1642px;top:533.5px;width:270px;height:321.5px;background:#fff;border:1.25px solid #e4e7ed;border-radius:5px;box-shadow:0 2px 15px 0 rgba(0,0,0,.1);overflow:hidden">
<div class="a" style="left:0;top:305px;width:270px;height:42.5px;background:#f5f7fa"></div>
<div class="t" style="left:25px;top:313px;height:26px;line-height:26px;font-size:17.5px;color:#606266">通知状态</div>
<div class="t" style="right:24px;top:313px;height:26px;line-height:26px;font-size:16.25px;color:#8492a6">sys_notice_status</div>
</div>
<svg style="left:1781px;top:527px" width="16" height="8"><path d="M0 8 L8 0 L16 8" fill="#fff" stroke="#e4e7ed" stroke-width="1"/></svg>
<div class="t" style="left:1668px;top:547.8px;height:28px;line-height:28px;font-size:17.5px;color:#606266;font-weight:normal;">用户性别</div>
<div class="t" style="right:30px;top:548.8px;height:26px;line-height:26px;font-size:16.25px;color:#8492a6">sys_user_sex</div>
<div class="t" style="left:1668px;top:590.3px;height:28px;line-height:28px;font-size:17.5px;color:#606266;font-weight:normal;">菜单状态</div>
<div class="t" style="right:30px;top:591.3px;height:26px;line-height:26px;font-size:16.25px;color:#8492a6">sys_show_hide</div>
<div class="t" style="left:1668px;top:632.8px;height:28px;line-height:28px;font-size:17.5px;color:#606266;font-weight:normal;">系统开关</div>
<div class="t" style="right:30px;top:633.8px;height:26px;line-height:26px;font-size:16.25px;color:#8492a6">sys_normal_disable</div>
<div class="t" style="left:1668px;top:675.3px;height:28px;line-height:28px;font-size:17.5px;color:#606266;font-weight:normal;">任务状态</div>
<div class="t" style="right:30px;top:676.3px;height:26px;line-height:26px;font-size:16.25px;color:#8492a6">sys_job_status</div>
<div class="t" style="left:1668px;top:717.8px;height:28px;line-height:28px;font-size:17.5px;color:#606266;font-weight:normal;">任务分组</div>
<div class="t" style="right:30px;top:718.8px;height:26px;line-height:26px;font-size:16.25px;color:#8492a6">sys_job_group</div>
<div class="t" style="left:1668px;top:760.3px;height:28px;line-height:28px;font-size:17.5px;color:#606266;font-weight:normal;">系统是否</div>
<div class="t" style="right:30px;top:761.3px;height:26px;line-height:26px;font-size:16.25px;color:#8492a6">sys_yes_no</div>
<div class="t" style="left:1668px;top:802.8px;height:28px;line-height:28px;font-size:17.5px;color:#606266;font-weight:normal;">通知类型</div>
<div class="t" style="right:30px;top:803.8px;height:26px;line-height:26px;font-size:16.25px;color:#8492a6">sys_notice_type</div>
</body></html>
